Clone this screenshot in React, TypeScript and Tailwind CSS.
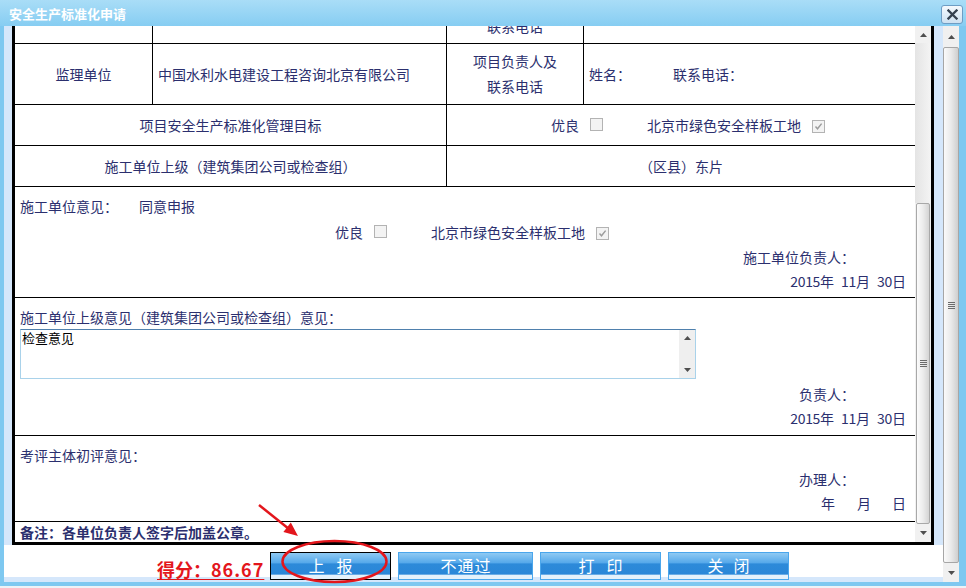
import React from "react";

const TXT = "text-[#2b2f6e]";

function Box({ checked }: { checked?: boolean }) {
  return (
    <span className="inline-flex w-[13px] h-[13px] border border-[#b3b3b3] bg-[#f3f3f3] items-center justify-center shrink-0">
      {checked && (
        <svg width="9" height="9" viewBox="0 0 9 9">
          <path d="M1.5 4.5 L3.5 6.8 L7.6 1.6" stroke="#9c9c9c" strokeWidth="1.4" fill="none" />
        </svg>
      )}
    </span>
  );
}

function Goal() {
  return (
    <div className="flex items-center">
      <span>优良</span>
      <span className="ml-[11px]">
        <Box />
      </span>
      <span className="ml-[44px]">北京市绿色安全样板工地</span>
      <span className="ml-[11px]">
        <Box checked />
      </span>
    </div>
  );
}

function DateLine() {
  return (
    <div className="h-[24px] flex items-center justify-end">
      <span className="tracking-[-0.3px]">2015</span>
      <span>年</span>
      <span className="ml-[7px] tracking-[-0.3px]">11</span>
      <span>月</span>
      <span className="ml-[7px] tracking-[-0.3px]">30</span>
      <span>日</span>
    </div>
  );
}

function Tri({ up }: { up?: boolean }) {
  return (
    <svg width="7" height="4" viewBox="0 0 7 4">
      {up ? <path d="M0 4 L3.5 0 L7 4 Z" fill="#4e4e4e" /> : <path d="M0 0 L7 0 L3.5 4 Z" fill="#4e4e4e" />}
    </svg>
  );
}

function Grip() {
  return (
    <div className="flex flex-col gap-[1px]">
      <div className="w-[7px] h-[1px] bg-[#6b6b6b]" />
      <div className="w-[7px] h-[1px] bg-[#6b6b6b]" />
      <div className="w-[7px] h-[1px] bg-[#6b6b6b]" />
      <div className="w-[7px] h-[1px] bg-[#6b6b6b]" />
    </div>
  );
}

function Btn({ children, cls, focus }: { children: React.ReactNode; cls: string; focus?: boolean }) {
  return (
    <div
      className={
        "h-[28px] shrink-0 flex items-center justify-center pb-[3px] text-white text-[16px] leading-none bg-[linear-gradient(to_bottom,#8fcaf3_0%,#55a8ea_38%,#2d8ad9_42%,#2a87d8_82%,#e4f1fb_84%,#e4f1fb_100%)] " +
        (focus ? "border border-black " : "border border-[#4aa6ec] ") +
        cls
      }
    >
      {children}
    </div>
  );
}

export default function App() {
  return (
    <div className="relative w-[966px] h-[588px] overflow-hidden bg-white font-['Noto_Sans_CJK_SC','Noto_Sans',sans-serif]">
      {/* title bar */}
      <div className="h-[26px] flex items-center justify-between pl-[9px] pr-[3px] bg-linear-to-b from-[#a9ddf7] to-[#86cdf2]">
        <span className="text-white font-bold text-[13px] leading-none">安全生产标准化申请</span>
        <div className="w-[22px] h-[19px] mt-[2px] rounded-[3px] border border-[#6d9dc4] bg-linear-to-b from-[#f4f9fd] to-[#cde1f1] flex items-center justify-center">
          <svg width="11" height="11" viewBox="0 0 11 11">
            <path d="M1.5 1.5 L9.5 9.5 M9.5 1.5 L1.5 9.5" stroke="#34414f" strokeWidth="2.3" strokeLinecap="square" />
          </svg>
        </div>
      </div>

      {/* body */}
      <div className="flex h-[556px]">
        <div className="w-[4px] bg-[#7ec8f0]" />
        <div className="w-[939px] flex flex-col">
          <div className="h-[519px] flex bg-[#d5e7fb]">
            <div className="w-[8px]" />
            <div className={"w-[922px] border-x-[3px] border-b-[3px] border-black bg-white flex text-[14px] " + TXT}>
              {/* table area (scrolled) */}
              <div className="w-[900px] h-full overflow-hidden">
                <div className="-mt-[44px]">
                  {/* row0 */}
                  <div className="h-[62px] flex border-b border-black">
                    <div className="w-[138px] border-r border-black" />
                    <div className="w-[294px] border-r border-black" />
                    <div className="w-[137px] border-r border-black flex flex-col items-center justify-end pb-[4px] leading-[25px]">
                      <span>联系电话</span>
                    </div>
                    <div className="w-[331px]" />
                  </div>
                  {/* row1 */}
                  <div className="h-[61px] flex border-b border-black">
                    <div className="w-[138px] border-r border-black flex items-center justify-center">监理单位</div>
                    <div className="w-[294px] border-r border-black flex items-center pl-[5px]">中国水利水电建设工程咨询北京有限公司</div>
                    <div className="w-[137px] border-r border-black flex flex-col items-center justify-center leading-[25px]">
                      <span>项目负责人及</span>
                      <span>联系电话</span>
                    </div>
                    <div className="w-[331px] flex items-center pl-[5px]">
                      <span>姓名：</span>
                      <span className="ml-[42px]">联系电话：</span>
                    </div>
                  </div>
                  {/* row2 */}
                  <div className="h-[41px] flex border-b border-black">
                    <div className="w-[432px] border-r border-black flex items-center justify-center">项目安全生产标准化管理目标</div>
                    <div className="w-[468px] flex items-center justify-center pl-[14px]">
                      <Goal />
                    </div>
                  </div>
                  {/* row3 */}
                  <div className="h-[41px] flex border-b border-black">
                    <div className="w-[432px] border-r border-black flex items-center justify-center">施工单位上级（建筑集团公司或检查组）</div>
                    <div className="w-[468px] flex items-center justify-center">（区县）东片</div>
                  </div>
                  {/* row4 */}
                  <div className="h-[111px] flex flex-col border-b border-black pt-[6px] pl-[5px] pr-[9px]">
                    <div className="h-[26px] flex items-center">
                      <span>施工单位意见：</span>
                      <span className="ml-[21px]">同意申报</span>
                    </div>
                    <div className="h-[26px] flex items-center pl-[315px]">
                      <Goal />
                    </div>
                    <div className="h-[24px] flex items-center justify-end pr-[51px]">施工单位负责人：</div>
                    <DateLine />
                  </div>
                  {/* row5 */}
                  <div className="h-[138px] flex flex-col border-b border-black pt-[7px] pl-[5px] pr-[9px]">
                    <div className="h-[24px] flex items-center">施工单位上级意见（建筑集团公司或检查组）意见：</div>
                    <div className="w-[676px] h-[50px] flex border border-[#a9d2ea] border-t-[#4f80ad] bg-white">
                      <div className="flex-1 pl-[1px] text-[13px] leading-[15px] text-black">检查意见</div>
                      <div className="w-[16px] h-full bg-[#efefef] flex flex-col items-center justify-between py-[6px]">
                        <Tri up />
                        <Tri />
                      </div>
                    </div>
                    <div className="h-[24px] mt-[3px] flex items-center justify-end pr-[51px]">负责人：</div>
                    <DateLine />
                  </div>
                  {/* row6 */}
                  <div className="h-[86px] flex flex-col border-b border-black pt-[7px] pl-[5px] pr-[9px]">
                    <div className="h-[24px] flex items-center">考评主体初评意见：</div>
                    <div className="h-[24px] flex items-center justify-end pr-[51px]">办理人：</div>
                    <div className="h-[24px] flex items-center justify-end">
                      <span>年</span>
                      <span className="ml-[22px]">月</span>
                      <span className="ml-[21px]">日</span>
                    </div>
                  </div>
                  {/* row7 */}
                  <div className="h-[20px] flex items-center pl-[5px] font-bold">备注：各单位负责人签字后加盖公章。</div>
                </div>
              </div>
              {/* inner scrollbar */}
              <div className="w-[16px] h-full flex flex-col bg-[#f1f1f1]">
                <div className="h-[17px] flex items-center justify-center">
                  <Tri up />
                </div>
                <div className="h-[160px] bg-linear-to-r from-[#e4e4e4] to-[#f4f4f4]" />
                <div className="h-[321px] mx-[1px] border border-[#a8a8a8] rounded-[2px] bg-linear-to-r from-[#fbfbfb] via-[#ececec] to-[#d4d4d4] flex items-center justify-center">
                  <Grip />
                </div>
                <div className="flex-1 flex items-center justify-center">
                  <Tri />
                </div>
              </div>
            </div>
            <div className="w-[9px]" />
          </div>
          {/* bottom buttons */}
          <div className="h-[37px] bg-white border-b-[5px] border-[#d5e7fb] flex items-start pt-[7px] pl-[153px]">
            <span className="w-[106px] mt-[7px] text-[18px] leading-[20px] font-bold text-[#e3161c] underline underline-offset-[2px] whitespace-nowrap">
              得分：<span className="tracking-[1px]">86.67</span>
            </span>
            <div className="flex gap-[7px] ml-[7px]">
              <Btn cls="w-[121px] gap-[12px]" focus>
                <span>上</span>
                <span>报</span>
              </Btn>
              <Btn cls="w-[135px] gap-[1px]">
                <span>不</span>
                <span>通</span>
                <span>过</span>
              </Btn>
              <Btn cls="w-[121px] gap-[12px]">
                <span>打</span>
                <span>印</span>
              </Btn>
              <Btn cls="w-[121px] gap-[10px]">
                <span>关</span>
                <span>闭</span>
              </Btn>
            </div>
          </div>
        </div>
        {/* outer scrollbar */}
        <div className="w-[16px] flex flex-col bg-[#f0f0f0]">
          <div className="h-[21px] flex items-center justify-center">
            <Tri up />
          </div>
          <div className="h-[516px] border border-[#a6a6a6] rounded-[2px] bg-linear-to-r from-[#fafafa] via-[#eaeaea] to-[#cfcfcf] flex items-center justify-center">
            <Grip />
          </div>
          <div className="flex-1 flex items-center justify-center">
            <Tri />
          </div>
        </div>
        <div className="w-[7px] bg-[#7ec8f0]" />
      </div>
      <div className="h-[4px] bg-[#7ec8f0]" />
      <div className="h-[2px] bg-[#eef2f6]" />

      {/* red annotations */}
      <svg className="absolute left-0 top-0 pointer-events-none" width="966" height="588" viewBox="0 0 966 588">
        <ellipse cx="334.5" cy="561.5" rx="52" ry="20.5" fill="none" stroke="#e3161c" strokeWidth="2.5" />
        <line x1="259" y1="505" x2="289" y2="529" stroke="#e3161c" strokeWidth="2.5" />
        <polygon points="298,536 283.4,532 290.8,522.6" fill="#e3161c" />
      </svg>
    </div>
  );
}
